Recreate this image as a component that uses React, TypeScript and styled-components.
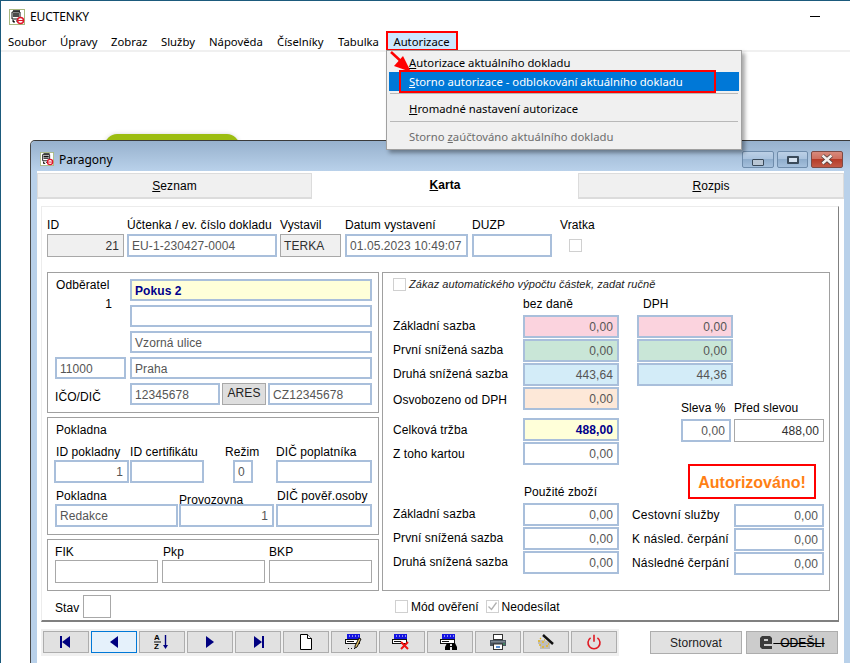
import React from "react";
import styled, { createGlobalStyle } from "styled-components";

const Global = createGlobalStyle`
  html, body { margin: 0; padding: 0; width: 850px; height: 663px; overflow: hidden; background: #fff; }
  #root { width: 850px; height: 663px; }
`;

const Root = styled.div`
  position: relative;
  width: 850px; height: 663px; box-sizing: border-box; overflow: hidden;
  border-top: 1px solid #1b5a7c; border-left: 1px solid #1b5a7c;
  display: flex; flex-direction: column;
  font-family: "Noto Sans", sans-serif; font-size: 12px; color: #000; background: #fff;
`;
const TitleBar = styled.div`
  height: 32px; flex: none; display: flex; align-items: center; padding-left: 8px; gap: 5px; padding-bottom: 1px; box-sizing: border-box;
`;
const TitleText = styled.span`font-size: 12px; letter-spacing: -0.1px;`;
const Controls = styled.div`
  margin-left: auto; display: flex; align-items: center; gap: 36px; margin-right: -16px;
`;
const MinGlyph = styled.div`width: 10px; height: 1px; background: #000;`;
const MaxGlyph = styled.div`width: 10px; height: 10px; box-sizing: border-box; border: 1px solid #000;`;
const MenuBar = styled.div`
  height: 17px; flex: none; display: flex; align-items: center; padding-left: 7px; border-bottom: 2px solid #f0f0f0; box-sizing: content-box; position: relative;
`;
const MenuItem = styled.span<{ $w: number }>`width: ${p => p.$w}px; flex: none; font-size: 11.3px; white-space: nowrap;`;
const ActiveMenu = styled.span`
  position: absolute; left: 385px; top: -2px; width: 72px; height: 20px; box-sizing: border-box;
  border: 2px solid #f00; background: #cce8ff; display: flex; align-items: center; justify-content: center; font-size: 11.3px; padding-right: 1px;
`;
const Dropdown = styled.div`
  position: absolute; left: 385px; top: 49px; width: 356px; height: 100px; box-sizing: border-box; z-index: 5;
  background: #f0f0f0; border: 1px solid #a0a0a0; box-shadow: 3px 3px 4px rgba(0,0,0,.35);
  padding: 2px 2px; display: flex; flex-direction: column;
`;
const DropItem = styled.div<{ $active?: boolean; $off?: boolean; $h: number; $pt?: number }>`
  height: ${p => p.$h}px; flex: none; box-sizing: border-box; display: flex; align-items: center; padding: ${p => p.$pt ?? 0}px 0 0 20px; font-size: 11.3px; white-space: nowrap;
  background: ${p => (p.$active ? "#0078d7" : "transparent")};
  color: ${p => (p.$active ? "#fff" : p.$off ? "#6d6d6d" : "#000")};
`;
const DropSep = styled.div`height: 1px; background: #b8b8b8; margin: 2px 1px 0 1px; flex: none;`;
const RedBox = styled.div`
  position: absolute; left: 398px; top: 69px; width: 317px; height: 23px; box-sizing: border-box; border: 2px solid #f00; z-index: 6;
`;
const ArrowSvg = styled.svg`position: absolute; left: 380px; top: 45px; z-index: 7;`;

const Desktop = styled.div`position: relative; flex: 1;`;
const GreenTab = styled.div`
  position: absolute; left: 104px; top: 82px; width: 134px; height: 40px; background: #9cbd10; border-radius: 12px;
  box-shadow: 0 0 4px rgba(120,120,120,.3);
`;
const ChildWindow = styled.div`
  position: absolute; left: 29px; top: 88px; width: 830px; height: 530px; box-sizing: border-box;
  border-top: 1px solid #3a3a3a; border-left: 1px solid #4a4a4a; border-top-left-radius: 5px;
  background: #b9d1ea; display: flex; flex-direction: column;
`;
const ChildTitle = styled.div`
  height: 30px; flex: none; display: flex; align-items: center; padding: 6px 0 0 9px; gap: 5px; box-sizing: border-box;
  background: linear-gradient(#97b1cd, #b9d1ea); font-size: 12px; width: 100%; border-top-left-radius: 5px;
`;
const WinButtons = styled.div`margin-left: auto; margin-right: 17px; display: flex; gap: 3px; align-self: flex-start; margin-top: 4px;`;
const WinBtn = styled.div<{ $close?: boolean; $w: number }>`
  width: ${p => p.$w}px; height: 17px; box-sizing: border-box; border-radius: 2px;
  border: 1px solid ${p => (p.$close ? "#7d4a44" : "#6f8cab")};
  background: ${p => p.$close
    ? "linear-gradient(#d78a7c 0%, #cf6f5e 45%, #b63c28 50%, #c25a46 100%)"
    : "linear-gradient(#bcd0e6 0%, #aac3de 45%, #8fadcc 50%, #a5c0dc 100%)"};
  display: flex; align-items: center; justify-content: center;
`;
const MinIcon = styled.div`width: 10px; height: 5px; margin-top: 5px; background: #b9c6d4; border: 1px solid #3a4a5a; border-radius: 1px;`;
const MaxIcon = styled.div`width: 12px; height: 8px; box-sizing: border-box; background: #d5e2f0; border: 2px solid #3a4a5a; border-radius: 1px; display:flex; align-items:center; justify-content:center;`;

const Client = styled.div`
  flex: 1; margin: 0 0 5px 6px; width: 807px; background: #fff; display: flex; flex-direction: column; font-family: "Liberation Sans", Arial, sans-serif; font-size: 12px; letter-spacing: 0.08px;
`;
const Tabs = styled.div`display: flex; height: 28px; flex: none; align-items: flex-start;`;
const Tab = styled.div<{ $w: number; $active?: boolean }>`
  width: ${p => p.$w}px; box-sizing: border-box; flex: none;
  height: ${p => (p.$active ? 28 : 26)}px;
  margin-top: ${p => (p.$active ? 0 : 2)}px;
  padding-top: ${p => (p.$active ? 7 : 0)}px;
  background: ${p => (p.$active ? "#fff" : "#f0f0f0")};
  border: ${p => (p.$active ? "none" : "1px solid #dcdcdc")};
  border-bottom-width: ${p => (p.$active ? 0 : 2)}px;
  display: flex; justify-content: center; align-items: ${p => (p.$active ? "flex-start" : "center")};
  font-weight: ${p => (p.$active ? 700 : 400)};
`;
const Panel = styled.div`
  margin: 7px 0 0 4px; width: 798px; height: 416px; box-sizing: border-box; flex: none;
  border-top: 1px solid #ececec; border-left: 1px solid #ececec; border-right: 1px solid #808080; border-bottom: 2px solid #808080;
  padding: 12px 0 0 5px;
`;
const TopRow = styled.div`display: flex; align-items: flex-start;`;
const Col = styled.div<{ $w: number; $mr?: number; $ml?: number }>`
  width: ${p => p.$w}px; flex: none; margin-right: ${p => p.$mr ?? 0}px; margin-left: ${p => p.$ml ?? 0}px;
`;
const Label = styled.div<{ $pl?: number; $lh?: number }>`
  height: 15px; line-height: ${p => p.$lh ?? 15}px; white-space: nowrap; padding-left: ${p => p.$pl ?? 0}px;
`;
const Field = styled.div<{ $tone?: string; $bg?: string; $right?: boolean; $w?: number; $h?: number; $ml?: number; $strong?: boolean }>`
  box-sizing: border-box; height: ${p => p.$h ?? 23}px; flex: none;
  width: ${p => (p.$w ? p.$w + "px" : "100%")}; margin-left: ${p => p.$ml ?? 0}px;
  display: flex; align-items: center; justify-content: ${p => (p.$right ? "flex-end" : "flex-start")};
  padding: ${p => (p.$h === 22 ? 1 : 0)}px ${p => (p.$right ? 4 : 3)}px 0 3px; white-space: nowrap; overflow: hidden;
  border: ${p => (p.$tone === "gray" || p.$tone === "thin" ? "1px solid #a8a8a8" : "2px solid #a9bfdb")};
  background: ${p => p.$bg ?? (p.$tone === "gray" ? "#f0f0f0" : "#fff")};
  color: ${p => (p.$strong ? "#00008b" : p.$tone === "gray" || p.$tone === "thin" ? "#303030" : "#555")};
  font-weight: ${p => (p.$strong ? 700 : 400)};
`;
const Check = styled.div<{ $ml?: number; $mt?: number }>`
  width: 13px; height: 13px; box-sizing: border-box; border: 1px solid #d0d0d0; background: #fff; flex: none;
  margin-left: ${p => p.$ml ?? 0}px; margin-top: ${p => p.$mt ?? 0}px;
  display: flex; align-items: center; justify-content: center;
`;
const MainRow = styled.div`display: flex; gap: 3px; margin-top: 15px;`;
const LeftCol = styled.div`width: 332px; flex: none; display: flex; flex-direction: column; gap: 4px;`;
const Group = styled.div<{ $h: number; $pt: number }>`
  height: ${p => p.$h}px; box-sizing: border-box; border: 1px solid #a0a0a0; padding: ${p => p.$pt}px 6px 0 7px;
`;
const CustomerGrid = styled.div`
  display: grid; grid-template-columns: 75px 242px; grid-template-rows: repeat(5, 22px); row-gap: 4px;
`;
const CustomerInfo = styled.div`grid-row: span 3; display: flex; flex-direction: column;`;
const CustomerNo = styled.div`width: 57px; text-align: right; margin-top: 3px;`;
const PairRow = styled.div`display: flex; gap: 2px;`;
const AresBtn = styled.div`
  width: 44px; height: 22px; box-sizing: border-box; background: #dedede; border: 1px solid #a8a8a8; flex: none; color: #222;
  display: flex; align-items: center; justify-content: center; padding-bottom: 2px;
`;
const CenterLabel = styled.div`display: flex; align-items: center; padding-top: 6px; height: 22px; box-sizing: border-box;`;
const PosRow = styled.div<{ $cols: string; $mt: number; $ml: number }>`
  display: grid; grid-template-columns: ${p => p.$cols}; margin-top: ${p => p.$mt}px; margin-left: ${p => p.$ml}px;
`;
const TriGrid = styled.div`display: grid; grid-template-columns: repeat(3, 103px); column-gap: 4px;`;
const RightGroup = styled.div`
  width: 448px; height: 319px; box-sizing: border-box; border: 1px solid #a0a0a0; padding: 4px 0 0 10px; flex: none;
`;
const NoAutoRow = styled.div`display: flex; align-items: center; gap: 3px; height: 14px; font-style: italic; color: #222; font-size: 11px; letter-spacing: 0.05px; margin-bottom: 6px;`;
const NoAutoText = styled.span`margin-top: -1px;`;
const SumColumns = styled.div`display: flex;`;
const SumLeft = styled.div`width: 226px; flex: none; display: flex; flex-direction: column; gap: 1px;`;
const SumRight = styled.div`width: 205px; flex: none; display: flex; flex-direction: column; gap: 1px;`;
const ColHead = styled.div<{ $pl: number; $mt?: number }>`
  height: 17px; line-height: 15px; padding-left: ${p => p.$pl}px; margin-top: ${p => p.$mt ?? 0}px; white-space: nowrap; box-sizing: border-box;
`;
const SumRow = styled.div<{ $mt?: number }>`
  display: grid; grid-template-columns: 130px 96px; height: 23px; align-items: center; margin-top: ${p => p.$mt ?? 0}px; white-space: nowrap;
`;
const RowLabel = styled.span<{ $low?: boolean; $mid?: boolean }>`padding: ${p => (p.$low ? "2px 0 0" : p.$mid ? "0" : "0 0 2px")};`;
const SideRow = styled.div`
  display: grid; grid-template-columns: 115px 90px; height: 23px; align-items: center; white-space: nowrap; padding-left: 0;
`;
const SideLabel = styled.div`padding: 0 0 2px 13px; letter-spacing: 0.2px;`;
const DiscountHead = styled.div`display: flex; margin-top: 14px; padding-left: 62px; height: 17px; line-height: 14px; white-space: nowrap;`;
const DiscountCells = styled.div`display: flex; gap: 3px; padding-left: 62px;`;
const AuthBadge = styled.div`
  margin: 21px 0 4px 69px; width: 128px; height: 35px; box-sizing: border-box; border: 2px solid #f00;
  color: #ff7f14; font-weight: 700; font-size: 16px; display: flex; align-items: center; justify-content: center; padding-top: 3px; letter-spacing: 0;
`;
const StateRow = styled.div`display: flex; margin-top: 4px; height: 23px; align-items: center;`;
const StateLeft = styled.div`width: 348px; flex: none; display: flex; align-items: center; padding-left: 8px; gap: 4px; box-sizing: border-box;`;
const StateText = styled.span`padding-top: 2px;`;
const CheckLabel = styled.div`margin-left: 3px; margin-right: 7px; white-space: nowrap;`;

const BottomRow = styled.div`display: flex; margin: 7px 0 0 4px; align-items: flex-start;`;
const Toolbar = styled.div`display: flex; gap: 2px; padding: 2px; background: #f0f0f0; height: 27px; box-sizing: border-box; flex: none;`;
const ToolBtn = styled.div<{ $focus?: boolean }>`
  width: 46px; height: 22px; box-sizing: border-box; flex: none;
  background: ${p => (p.$focus ? "#e5f1fb" : "#e1e1e1")};
  border: ${p => (p.$focus ? "1px solid #0078d7" : "1px solid #adadad")};
  display: flex; align-items: center; justify-content: center;
`;
const ActionBtn = styled.div<{ $dark?: boolean; $ml: number }>`
  width: 92px; height: 23px; box-sizing: border-box; flex: none; margin-top: 2px; margin-left: ${p => p.$ml}px;
  background: ${p => (p.$dark ? "#cccccc" : "#e1e1e1")}; border: 1px solid #adadad;
  display: flex; align-items: center; justify-content: center; color: #222;
`;
const StruckText = styled.span`text-decoration: line-through; font-weight: 400; -webkit-text-stroke: 0.2px #000; color: #000;`;
const SortLetters = styled.text`font-family: "Liberation Sans", sans-serif; font-size: 8px; font-weight: 700; fill: #000;`;

const AppIcon = ({ size }: { size: number }) => (
  <svg width={size} height={size} viewBox="0 0 16 16">
    <rect x=".5" y=".5" width="15" height="15" fill="#fff" stroke="#a8b880" />
    <path d="M3 3h8v7H3z" fill="#fff" stroke="#111" />
    <path d="M4 5h6M4 7h6M4 2h7" stroke="#111" strokeWidth="1.4" />
    <path d="M4 11v2h2M7 12h1" stroke="#111" />
    <circle cx="11.5" cy="11.5" r="3" fill="#fff" stroke="#e0162b" strokeWidth="1.5" />
    <path d="M9 11.5h5" stroke="#e0162b" />
  </svg>
);
const Nav = ({ dir, bar }: { dir: "l" | "r"; bar?: boolean }) => (
  <svg width="14" height="14" viewBox="0 0 14 14">
    {dir === "l" ? <path d="M11 1v12L3 7z" fill="#000080" /> : <path d="M3 1v12l8-6z" fill="#000080" />}
    {bar && (dir === "l" ? <rect x="1" y="1" width="2" height="12" fill="#000080" /> : <rect x="11" y="1" width="2" height="12" fill="#000080" />)}
  </svg>
);
const Sort = () => (
  <svg width="16" height="18" viewBox="0 0 16 18">
    <SortLetters x="0" y="7">A</SortLetters>
    <SortLetters x="0" y="16.4">Z</SortLetters>
    <path d="M0 9h7" stroke="#000" />
    <path d="M11.5 2v11" stroke="#000080" strokeWidth="1.4" />
    <path d="M9 12h5l-2.5 4z" fill="#000080" />
  </svg>
);
const Page = () => (
  <svg width="14" height="16" viewBox="0 0 14 16">
    <path d="M1.5.5h7l4 4v11h-11z" fill="#fff" stroke="#000" />
    <path d="M8.5.5v4h4" fill="#fff" stroke="#000" />
  </svg>
);
const FormBase = () => (
  <>
    <rect x="2" y="0" width="13" height="5" fill="#1414e0" />
    <path d="M4 2h1M7 2h1M10 2h1M13 2h1" stroke="#fff" />
    <rect x=".5" y="5.5" width="14" height="4" fill="#fff" stroke="#111" />
    <path d="M2 7.5h7" stroke="#111" />
  </>
);
const EditIcon = () => (
  <svg width="18" height="16" viewBox="0 0 18 16">
    <FormBase />
    <path d="M3 14.5h1M6 14.5h1M9 14.5h1" stroke="#111" />
    <path d="M16 5l-4 8-2 1 0-2 4-8z" fill="#e8c66a" stroke="#111" />
  </svg>
);
const DeleteIcon = () => (
  <svg width="20" height="16" viewBox="0 0 20 16">
    <FormBase />
    <path d="M9 8l7 7M16 8l-7 7" stroke="#f01010" strokeWidth="2" />
  </svg>
);
const FindIcon = () => (
  <svg width="20" height="16" viewBox="0 0 20 16">
    <FormBase />
    <path d="M5 16v-3l2-4h3v3h2V9h3l2 4v3h-5v-3h-2v3z" fill="#000" />
  </svg>
);
const PrintIcon = () => (
  <svg width="18" height="16" viewBox="0 0 18 16">
    <rect x="4.5" y=".5" width="9" height="5" fill="#fff" stroke="#333" />
    <path d="M1 6h16v6H1z" fill="#4a5560" />
    <rect x="2" y="7" width="14" height="1.5" fill="#7a8590" />
    <rect x="4.5" y="10" width="9" height="5.5" fill="#fff" stroke="#333" />
    <rect x="7" y="12" width="4" height="2" fill="#5a8fd0" />
    <circle cx="15" cy="10" r=".8" fill="#3cc060" />
  </svg>
);
const WandIcon = () => (
  <svg width="18" height="16" viewBox="0 0 18 16">
    <path d="M1 6h5l7 2v7H3V10H1z" fill="#bdbdbd" />
    <path d="M1 7h2M3 4l1 1M5 8h2M2 11h2M5 13h2M9 12h2M11 10h1M7 6h1" stroke="#e8b820" strokeWidth="1.3" />
    <path d="M6 1l10 9" stroke="#111" strokeWidth="2.4" />
  </svg>
);
const PowerIcon = () => (
  <svg width="16" height="16" viewBox="0 0 16 16" fill="none" stroke="#e01b24" strokeWidth="1.6">
    <path d="M4.6 3.8a6 6 0 1 0 6.8 0" />
    <path d="M8 .8v7" />
  </svg>
);
const SendIcon = () => (
  <svg width="14" height="15" viewBox="0 0 14 15">
    <path d="M3 1h8l2 2v6H5v2h8v3H3l-2-2V3zM5 4v2h4V4z" fill="#3a3a3a" fillRule="evenodd" />
  </svg>
);
const TickMark = () => (
  <svg width="11" height="11" viewBox="0 0 11 11" fill="none" stroke="#b0b0b0" strokeWidth="1.3">
    <path d="M1.5 5.5l3 3 5-7" />
  </svg>
);
const CloseMark = () => (
  <svg width="14" height="11" viewBox="0 0 14 11">
    <path d="M2.5 1.5l9 8M11.5 1.5l-9 8" stroke="#4a3a3a" strokeWidth="4" />
    <path d="M2.5 1.5l9 8M11.5 1.5l-9 8" stroke="#f4f0ee" strokeWidth="2.4" />
  </svg>
);

const taxRows: [string, string, string, string][] = [
  ["Základní sazba", "#fbd3de", "0,00", "0,00"],
  ["První snížená sazba", "#c9e6d7", "0,00", "0,00"],
  ["Druhá snížená sazba", "#d3ecf8", "443,64", "44,36"],
];

export default function App() {
  return (
    <Root>
      <Global />
      <TitleBar>
        <AppIcon size={16} />
        <TitleText>EUCTENKY</TitleText>
        <Controls><MinGlyph /><MaxGlyph /></Controls>
      </TitleBar>
      <MenuBar>
        <MenuItem $w={52}>Soubor</MenuItem>
        <MenuItem $w={51}>Úpravy</MenuItem>
        <MenuItem $w={50}>Zobraz</MenuItem>
        <MenuItem $w={48}>Služby</MenuItem>
        <MenuItem $w={68}>Nápověda</MenuItem>
        <MenuItem $w={61}>Číselníky</MenuItem>
        <MenuItem $w={54}>Tabulka</MenuItem>
        <ActiveMenu>Autorizace</ActiveMenu>
      </MenuBar>
      <Dropdown>
        <DropItem $h={19}><span><u>A</u>utorizace aktuálního dokladu</span></DropItem>
        <DropItem $h={19} $active><span><u>S</u>torno autorizace - odblokování aktuálního dokladu</span></DropItem>
        <DropSep />
        <DropItem $h={25} $pt={3}><span><u>H</u>romadné nastavení autorizace</span></DropItem>
        <DropSep />
        <DropItem $h={25} $pt={3} $off><span>Storno <u>z</u>aúčtováno aktuálního dokladu</span></DropItem>
      </Dropdown>
      <RedBox />
      <ArrowSvg width="40" height="35" viewBox="0 0 40 35">
        <path d="M10 6l14 13" stroke="#f00" strokeWidth="2.5" />
        <path d="M30 26L22 10 13 20z" fill="#f00" />
      </ArrowSvg>
      <Desktop>
        <GreenTab />
        <ChildWindow>
          <ChildTitle>
            <AppIcon size={14} />
            <span>Paragony</span>
            <WinButtons>
              <WinBtn $w={32}><MinIcon /></WinBtn>
              <WinBtn $w={31}><MaxIcon /></WinBtn>
              <WinBtn $w={32} $close><CloseMark /></WinBtn>
            </WinButtons>
          </ChildTitle>
          <Client>
            <Tabs>
              <Tab $w={275}><span><u>S</u>eznam</span></Tab>
              <Tab $w={266} $active><span><u>K</u>arta</span></Tab>
              <Tab $w={266}><span><u>R</u>ozpis</span></Tab>
            </Tabs>
            <Panel>
              <TopRow>
                <Col $w={77} $mr={3}><Label $lh={13}>ID</Label><Field $tone="gray" $right>21</Field></Col>
                <Col $w={150} $mr={3}><Label $lh={13}>Účtenka / ev. číslo dokladu</Label><Field>EU-1-230427-0004</Field></Col>
                <Col $w={61} $mr={4}><Label $lh={13}>Vystavil</Label><Field $tone="gray">TERKA</Field></Col>
                <Col $w={123} $mr={4}><Label $lh={13}>Datum vystavení</Label><Field>01.05.2023 10:49:07</Field></Col>
                <Col $w={80} $mr={8}><Label $lh={13}>DUZP</Label><Field /></Col>
                <Col $w={40}><Label $lh={13}>Vratka</Label><Check $ml={9} $mt={5} /></Col>
              </TopRow>
              <MainRow>
                <LeftCol>
                  <Group $h={141} $pt={6}>
                    <CustomerGrid>
                      <CustomerInfo>
                        <Label $pl={1} $lh={13}>Odběratel</Label>
                        <CustomerNo>1</CustomerNo>
                      </CustomerInfo>
                      <Field $h={22} $bg="#ffffd9" $strong>Pokus 2</Field>
                      <Field $h={22} />
                      <Field $h={22}>Vzorná ulice</Field>
                      <Field $h={22} $w={71}>11000</Field>
                      <Field $h={22}>Praha</Field>
                      <CenterLabel>IČO/DIČ</CenterLabel>
                      <PairRow>
                        <Field $h={22} $w={90}>12345678</Field>
                        <AresBtn>ARES</AresBtn>
                        <Field $h={22} $w={104}>CZ12345678</Field>
                      </PairRow>
                    </CustomerGrid>
                  </Group>
                  <Group $h={118} $pt={5}>
                    <Label $pl={1}>Pokladna</Label>
                    <PosRow $cols="76px 75px 71px 96px" $mt={7} $ml={-1}>
                      <Col $w={76}><Label $pl={2}>ID pokladny</Label><Field $w={75} $right>1</Field></Col>
                      <Col $w={75}><Label>ID certifikátu</Label><Field $w={74} /></Col>
                      <Col $w={71}><Label $pl={20}>Režim</Label><Field $w={20} $ml={28}>0</Field></Col>
                      <Col $w={96}><Label>DIČ poplatníka</Label><Field $w={96} /></Col>
                    </PosRow>
                    <PosRow $cols="124px 97px 96px" $mt={6} $ml={0}>
                      <Col $w={124}><Label $pl={1}>Pokladna</Label><Field $w={123}>Redakce</Field></Col>
                      <Col $w={97}><Label $lh={23}>Provozovna</Label><Field $w={95} $right>1</Field></Col>
                      <Col $w={96}><Label $pl={1}>DIČ pověř.osoby</Label><Field $w={96} /></Col>
                    </PosRow>
                  </Group>
                  <Group $h={52} $pt={5}>
                    <TriGrid>
                      <div><Label>FIK</Label><Field $tone="thin" /></div>
                      <div><Label $pl={1}>Pkp</Label><Field $tone="thin" /></div>
                      <div><Label>BKP</Label><Field $tone="thin" /></div>
                    </TriGrid>
                  </Group>
                </LeftCol>
                <RightGroup>
                  <NoAutoRow><Check /><NoAutoText>Zákaz automatického výpočtu částek, zadat ručně</NoAutoText></NoAutoRow>
                  <SumColumns>
                    <SumLeft>
                      <ColHead $pl={130}>bez daně</ColHead>
                      {taxRows.map(r => (
                        <SumRow key={r[0]}><RowLabel>{r[0]}</RowLabel><Field $bg={r[1]} $right>{r[2]}</Field></SumRow>
                      ))}
                      <SumRow><RowLabel $low>Osvobozeno od DPH</RowLabel><Field $bg="#fde8d8" $right>0,00</Field></SumRow>
                      <SumRow $mt={7}><RowLabel $mid>Celková tržba</RowLabel><Field $bg="#ffffd9" $right $strong>488,00</Field></SumRow>
                      <SumRow><RowLabel $mid>Z toho kartou</RowLabel><Field $right>0,00</Field></SumRow>
                      <ColHead $pl={131} $mt={19}>Použité zboží</ColHead>
                      <SumRow><RowLabel>Základní sazba</RowLabel><Field $right>0,00</Field></SumRow>
                      <SumRow><RowLabel>První snížená sazba</RowLabel><Field $right>0,00</Field></SumRow>
                      <SumRow><RowLabel>Druhá snížená sazba</RowLabel><Field $right>0,00</Field></SumRow>
                    </SumLeft>
                    <SumRight>
                      <ColHead $pl={24}>DPH</ColHead>
                      {taxRows.map(r => (
                        <Field key={r[0]} $bg={r[1]} $right $w={96} $ml={18}>{r[3]}</Field>
                      ))}
                      <DiscountHead><Col $w={53}>Sleva %</Col><span>Před slevou</span></DiscountHead>
                      <DiscountCells>
                        <Field $w={50} $right>0,00</Field>
                        <Field $w={90} $tone="thin" $right>488,00</Field>
                      </DiscountCells>
                      <AuthBadge>Autorizováno!</AuthBadge>
                      <SideRow><SideLabel>Cestovní služby</SideLabel><Field $right>0,00</Field></SideRow>
                      <SideRow><SideLabel>K násled. čerpání</SideLabel><Field $right>0,00</Field></SideRow>
                      <SideRow><SideLabel>Následné čerpání</SideLabel><Field $right>0,00</Field></SideRow>
                    </SumRight>
                  </SumColumns>
                </RightGroup>
              </MainRow>
              <StateRow>
                <StateLeft><StateText>Stav</StateText><Field $tone="thin" $w={28} /></StateLeft>
                <Check />
                <CheckLabel>Mód ověření</CheckLabel>
                <Check><TickMark /></Check>
                <CheckLabel>Neodesílat</CheckLabel>
              </StateRow>
            </Panel>
            <BottomRow>
              <Toolbar>
                <ToolBtn><Nav dir="l" bar /></ToolBtn>
                <ToolBtn $focus><Nav dir="l" /></ToolBtn>
                <ToolBtn><Sort /></ToolBtn>
                <ToolBtn><Nav dir="r" /></ToolBtn>
                <ToolBtn><Nav dir="r" bar /></ToolBtn>
                <ToolBtn><Page /></ToolBtn>
                <ToolBtn><EditIcon /></ToolBtn>
                <ToolBtn><DeleteIcon /></ToolBtn>
                <ToolBtn><FindIcon /></ToolBtn>
                <ToolBtn><PrintIcon /></ToolBtn>
                <ToolBtn><WandIcon /></ToolBtn>
                <ToolBtn><PowerIcon /></ToolBtn>
              </Toolbar>
              <ActionBtn $ml={31}>Stornovat</ActionBtn>
              <ActionBtn $ml={4} $dark><SendIcon /><StruckText>{"\u00a0\u00a0ODEŠLI"}</StruckText></ActionBtn>
            </BottomRow>
          </Client>
        </ChildWindow>
      </Desktop>
    </Root>
  );
}
